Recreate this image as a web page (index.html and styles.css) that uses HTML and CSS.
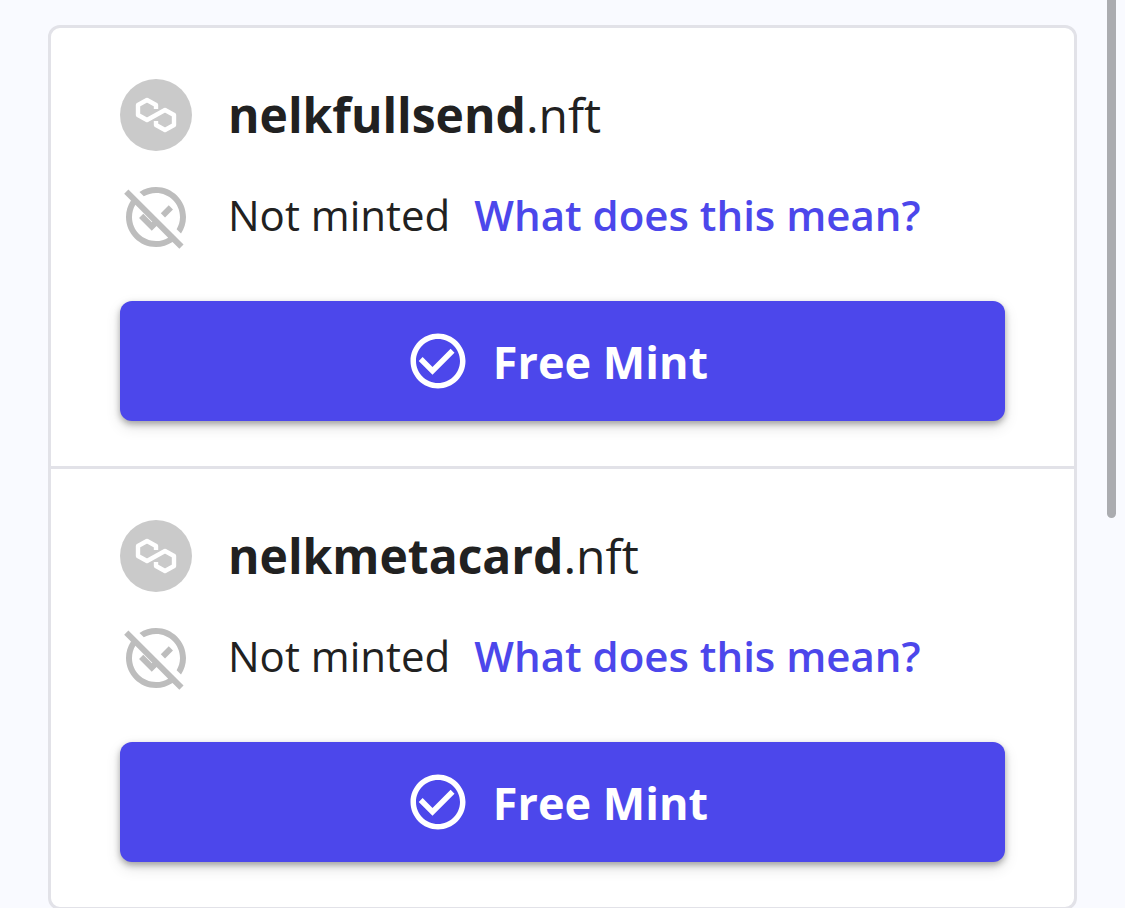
FILE: index.html
```html
<!DOCTYPE html>
<html lang="en">
<head>
    <meta charset="UTF-8">
    <meta name="viewport" content="width=device-width, initial-scale=1.0">
    <title>Free Mint</title>
    <link rel="stylesheet" href="styles.css">
</head>
<body>

    <!-- Shared icons -->
    <svg class="sprite" aria-hidden="true">
        <symbol id="icon-polygon" viewBox="0 0 72 72">
            <circle cx="36" cy="36" r="36" fill="#cacaca"/>
            <path d="M36 30V26L27 21 18 26V36L27 41 45 31 54 36V46L45 51 36 46V42" fill="none" stroke="#fff" stroke-width="4.4" stroke-linejoin="round"/>
        </symbol>
        <symbol id="icon-unpublished" viewBox="0 0 24 24">
            <path d="M7.94 5.12 6.49 3.66C8.07 2.61 9.96 2 12 2c5.52 0 10 4.48 10 10 0 2.04-.61 3.93-1.66 5.51l-1.46-1.46C19.59 14.86 20 13.48 20 12c0-4.41-3.59-8-8-8-1.48 0-2.86.41-4.06 1.12zM17.66 9.53l-1.41-1.41-2.65 2.65 1.41 1.41 2.65-2.65zM19.78 22.61l-2.27-2.27C15.93 21.39 14.04 22 12 22 6.48 22 2 17.52 2 12c0-2.04.61-3.93 1.66-5.51L1.39 4.22 2.8 2.81l18.38 18.38-1.4 1.42zM16.06 18.88l-3.88-3.88-1.59 1.59-4.24-4.24 1.41-1.41 2.83 2.83.18-.18L5.12 7.94C4.41 9.14 4 10.52 4 12c0 4.41 3.59 8 8 8 1.48 0 2.86-.41 4.06-1.12z" fill="#bdbdbd"/>
        </symbol>
        <symbol id="icon-check" viewBox="0 0 24 24">
            <path d="M16.59 7.58 10 14.17l-3.59-3.58L5 12l5 5 8-8zM12 2C6.48 2 2 6.48 2 12s4.48 10 10 10 10-4.48 10-10S17.52 2 12 2zm0 18c-4.42 0-8-3.58-8-8s3.58-8 8-8 8 3.58 8 8-3.58 8-8 8z" fill="#fff"/>
        </symbol>
    </svg>

    <main class="domain-list">
        <section class="domain">
            <div class="row">
                <svg class="icon" aria-hidden="true"><use href="#icon-polygon"/></svg>
                <h2 class="name">nelkfullsend<span class="extension">.nft</span></h2>
            </div>
            <div class="row">
                <svg class="icon" aria-hidden="true"><use href="#icon-unpublished"/></svg>
                <p class="status">Not minted <a class="help" href="#">What does this mean?</a></p>
            </div>
            <button type="button" class="mint">
                <svg class="mint-icon" aria-hidden="true"><use href="#icon-check"/></svg>
                Free Mint
            </button>
        </section>

        <section class="domain">
            <div class="row">
                <svg class="icon" aria-hidden="true"><use href="#icon-polygon"/></svg>
                <h2 class="name">nelkmetacard<span class="extension">.nft</span></h2>
            </div>
            <div class="row">
                <svg class="icon" aria-hidden="true"><use href="#icon-unpublished"/></svg>
                <p class="status">Not minted <a class="help" href="#">What does this mean?</a></p>
            </div>
            <button type="button" class="mint">
                <svg class="mint-icon" aria-hidden="true"><use href="#icon-check"/></svg>
                Free Mint
            </button>
        </section>
    </main>

    <div class="scroll-thumb"></div>

</body>
</html>
```
FILE: styles.css
```css
* {
    box-sizing: border-box;
}
body {
    margin: 0;
    padding: 25px 48px;
    height: 100vh;
    overflow: hidden;
    background-color: #f9faff;
    color: #212121;
    font-family: 'Open Sans', 'Noto Sans', sans-serif;
}
.sprite {
    display: none;
}
.domain-list {
    background-color: #fff;
    border: 3px solid #e2e2e8;
    border-radius: 12px;
}
.domain {
    display: flex;
    flex-direction: column;
    gap: 30px;
    padding: 51px 69px 45px;
}
.domain + .domain {
    border-top: 3px solid #e2e2e8;
}
.row {
    display: flex;
    align-items: center;
    gap: 36px;
}
.icon {
    width: 72px;
    height: 72px;
    flex-shrink: 0;
}
.name {
    margin: 0;
    font-size: 48px;
    line-height: 72px;
    font-weight: 700;
}
.extension {
    font-weight: 400;
}
.status {
    display: flex;
    flex-wrap: wrap;
    gap: 24px;
    margin: 0;
    padding-bottom: 4px;
    font-size: 42px;
    line-height: 68px;
}
.help {
    color: #4c47eb;
    font-weight: 600;
    text-decoration: none;
}
.mint {
    display: flex;
    align-items: center;
    justify-content: center;
    gap: 22px;
    width: 100%;
    height: 120px;
    margin-top: 18px;
    padding: 0;
    border: none;
    border-radius: 12px;
    background-color: #4c47eb;
    box-shadow: 0 3px 6px rgba(0, 0, 0, 0.3), 0 6px 15px rgba(0, 0, 0, 0.12);
    color: #fff;
    font-family: inherit;
    font-size: 45px;
    font-weight: 700;
    cursor: pointer;
}
.mint-icon {
    width: 66px;
    height: 66px;
    margin-left: -12px;
}
.scroll-thumb {
    position: fixed;
    top: -9px;
    right: 9px;
    width: 9px;
    height: 527px;
    border-radius: 5px;
    background-color: #abacb0;
}
```
